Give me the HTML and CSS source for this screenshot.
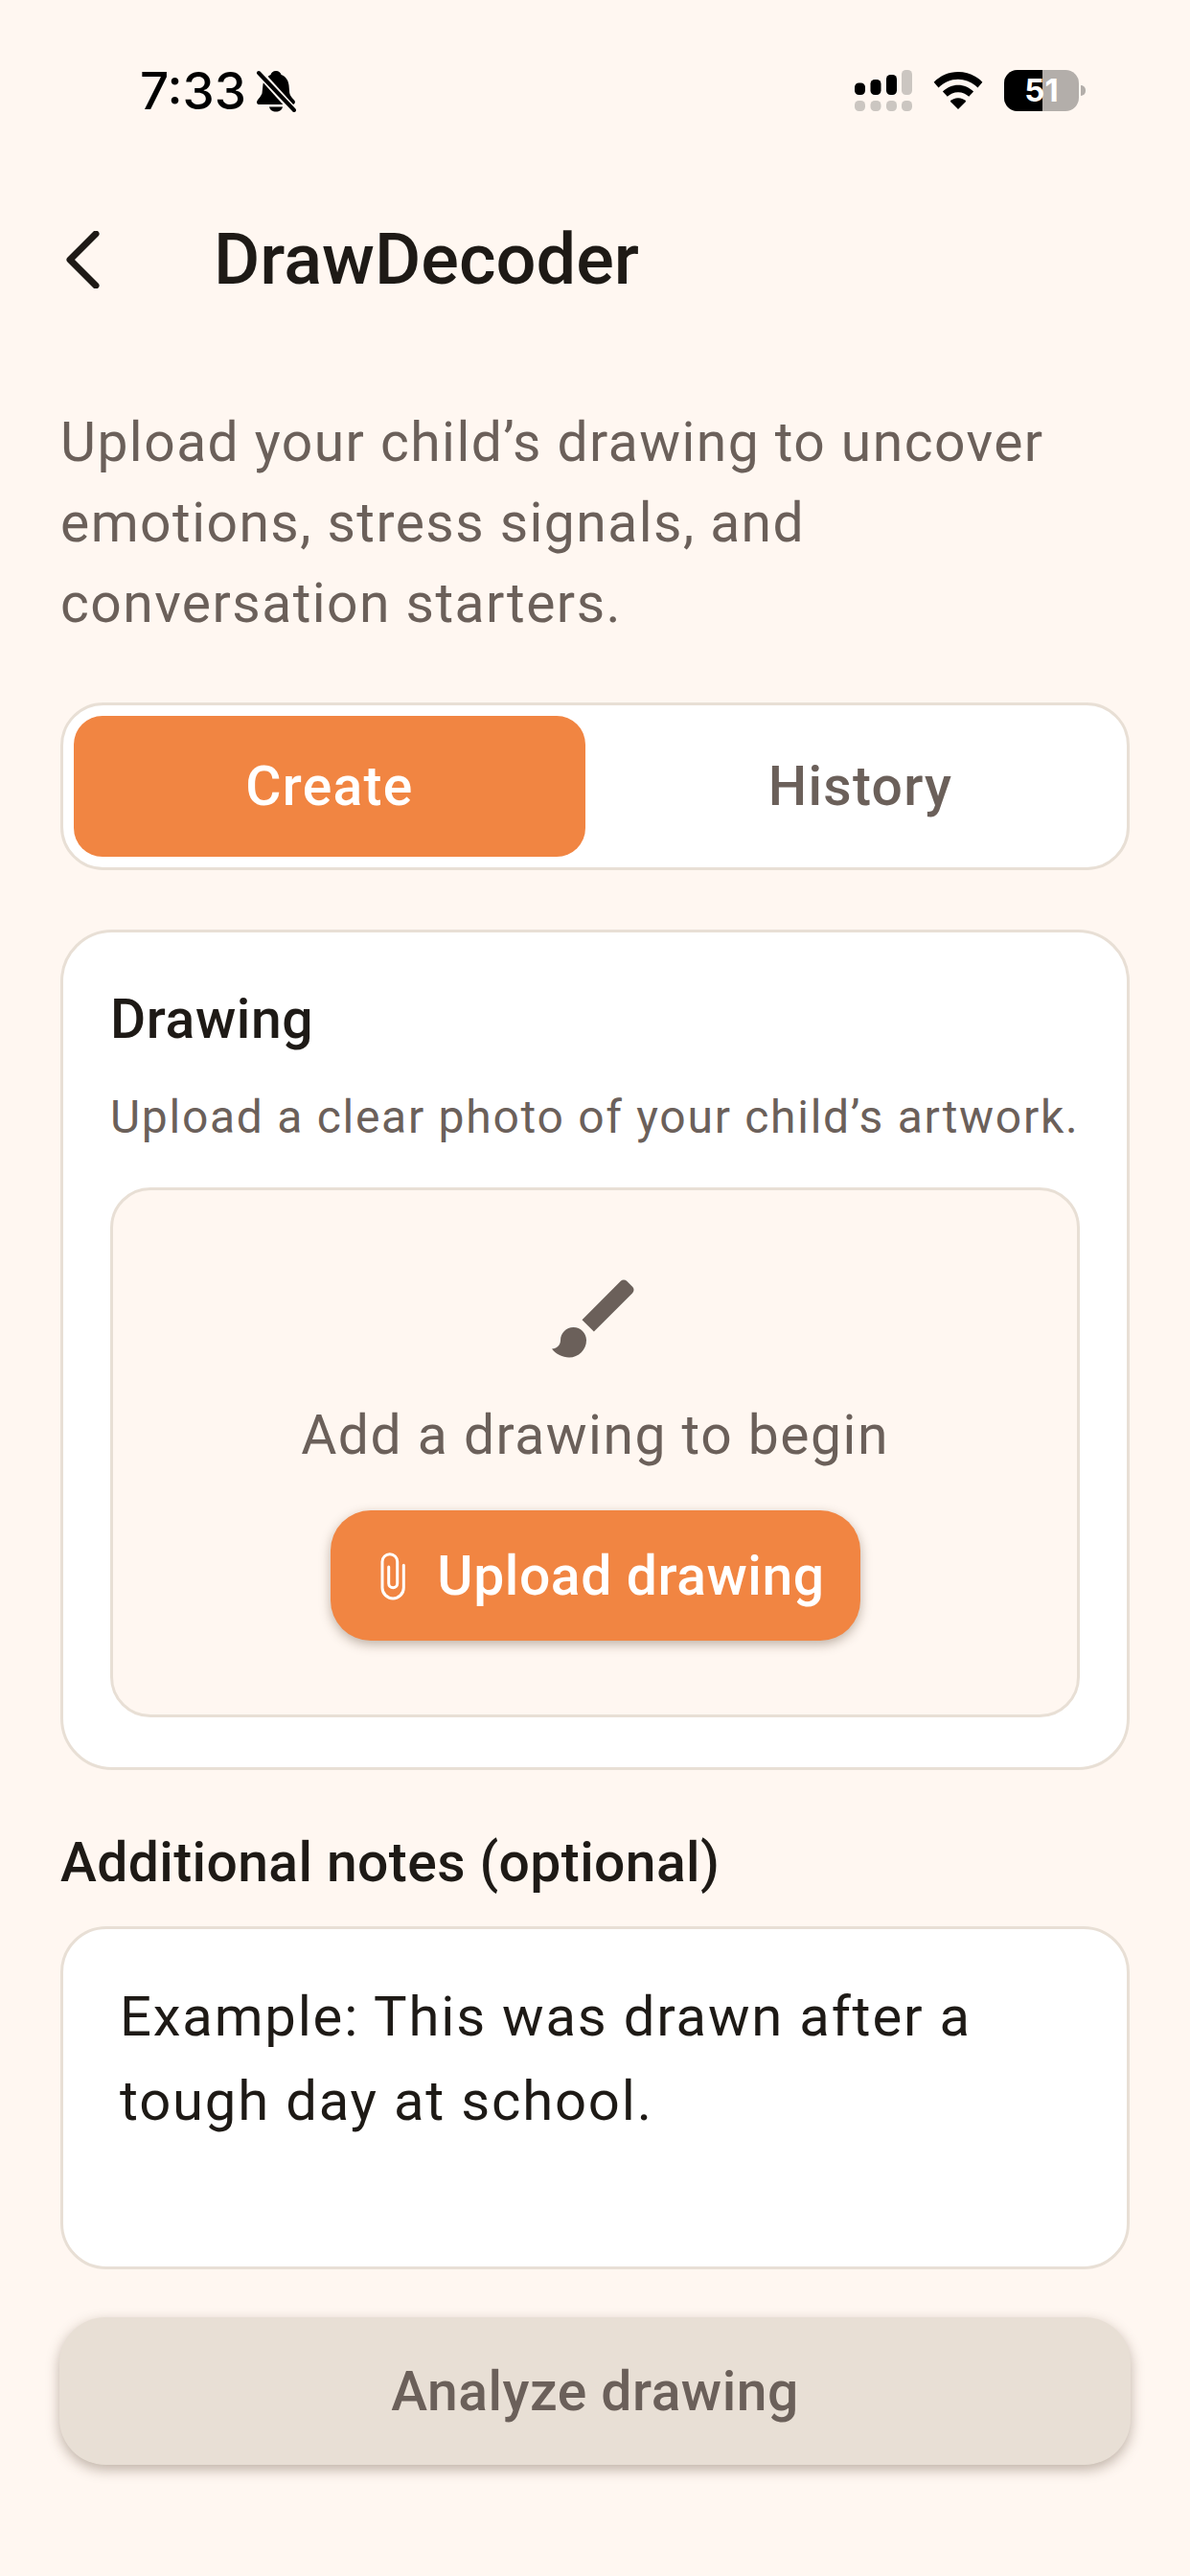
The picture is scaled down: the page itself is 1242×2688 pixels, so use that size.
FILE: index.html
```html
<!DOCTYPE html>
<html lang="en">
<head>
<meta charset="utf-8">
<title>DrawDecoder</title>
<link rel="stylesheet" href="styles.css">
</head>
<body>
<div class="status">
  <div class="status-left">
    <span class="time">7:33</span>
    <svg class="bell" viewBox="0 0 42 44"><path d="M21 1c3 0 5 2 5.500 4 5 2 7.500 6 8 11l.7 8c.3 3 2.800 5 5.300 8 1 2 0 4-2.500 4H4c-3 0-3.500-2-2.500-4 1.500-2.500 3.500-4 5-7.500L7.500 15c1-5 4-8 8-10 .5-2 2.500-4 5.500-4z"/><path d="M14 38.500h14c-.5 3-3.500 5-7 5s-6.500-2-7-5z"/><path class="bell-gap" d="M2 1l38 42"/><path class="bell-slash" d="M3 3l37 39"/></svg>
  </div>
  <div class="status-right">
    <svg class="signal" viewBox="0 0 60 43">
      <rect x="0" y="13.500" width="11" height="12.500" rx="4.500"/><rect x="16.500" y="10" width="11" height="16" rx="4.500"/><rect x="33" y="5" width="11" height="21" rx="4.500"/><rect class="dim" x="49" y="0" width="11" height="26" rx="4.500"/>
      <rect class="dim" x="0" y="32" width="11" height="11" rx="4.500"/><rect class="dim" x="16.500" y="32" width="11" height="11" rx="4.500"/><rect class="dim" x="33" y="32" width="11" height="11" rx="4.500"/><rect class="dim" x="49" y="32" width="11" height="11" rx="4.500"/>
    </svg>
    <svg class="wifi" viewBox="0 0 52 40"><path d="M26 0c10 0 19 4 26 11l-5 6C41 11 34 8 26 8S11 11 5 17L0 11C7 4 16 0 26 0z"/><path d="M26 14c6 0 12 2.500 16.500 7l-5 5.500c-3-3-7-4.700-11.500-4.700s-8.500 1.700-11.500 4.700l-5-5.500C14 16.500 20 14 26 14z"/><path d="M26 28c3.500 0 6.500 1.300 8.500 3.500L26 40l-8.500-8.500C19.500 29.300 22.500 28 26 28z"/></svg>
    <div class="battery">
      <div class="battery-body"><div class="battery-fill"></div><span class="battery-text">51</span></div>
      <div class="battery-cap"></div>
    </div>
  </div>
</div>

<main class="page">
  <header class="appbar">
    <svg class="back" viewBox="0 0 36 60"><path d="M32 3L5 30l27 27"/></svg>
    <h1 class="title">DrawDecoder</h1>
  </header>

  <p class="intro">Upload your child’s drawing to uncover emotions, stress signals, and conversation starters.</p>

  <div class="tabs">
    <div class="tab tab-active">Create</div>
    <div class="tab">History</div>
  </div>

  <section class="card">
    <h2 class="card-title">Drawing</h2>
    <p class="card-sub">Upload a clear photo of your child’s artwork.</p>
    <div class="dropzone">
      <svg class="brush" viewBox="0 0 24 24"><path d="M7 14c-1.660 0-3 1.340-3 3 0 1.310-1.160 2-2 2 .920 1.220 2.490 2 4 2 2.210 0 4-1.790 4-4 0-1.660-1.340-3-3-3zm13.710-9.370l-1.340-1.340c-.390-.390-1.020-.390-1.410 0L9 12.250 11.750 15l8.960-8.960c.390-.390.390-1.020 0-1.410z"/></svg>
      <p class="drop-text">Add a drawing to begin</p>
      <button class="upload" type="button">
        <svg class="clip" viewBox="-2 0 54 54"><path d="M38.300 16.300V39.800a11.150 11.150 0 0 1-22.300 0V12.550a7.850 7.850 0 0 1 15.700 0V35.200a4.500 4.500 0 0 1-9 0V18"/></svg>
        <span>Upload drawing</span>
      </button>
    </div>
  </section>

  <h2 class="notes-label">Additional notes (optional)</h2>
  <div class="notes">Example: This was drawn after a tough day at school.</div>

  <button class="analyze" type="button">Analyze drawing</button>
</main>
</body>
</html>
```

FILE: styles.css
```css
* { box-sizing: border-box; }
html, body { margin: 0; padding: 0; }
body {
  width: 1242px;
  height: 2688px;
  background: #fff7f1;
  color: #1e1a16;
  font-family: Roboto, "Noto Sans", sans-serif;
  overflow: hidden;
}
h1, h2, p { margin: 0; font-weight: inherit; }

.status {
  height: 190px;
  display: flex;
  justify-content: space-between;
  align-items: flex-start;
  padding: 68px 109px 0 146px;
}
.status-left { display: flex; align-items: center; gap: 10px; }
.time {
  font-family: Inter, Roboto, sans-serif;
  font-size: 53px;
  line-height: 54px;
  font-weight: 500;
  color: #000;
}
.bell { width: 42px; height: 44px; fill: #000; }
.bell-gap { fill: none; stroke: #fff7f1; stroke-width: 8px; }
.bell-slash { fill: none; stroke: #000; stroke-width: 4px; stroke-linecap: round; }
.status-right { display: flex; align-items: center; gap: 22px; padding-top: 5px; }
.signal { width: 60px; height: 43px; fill: #000; }
.signal .dim { fill: #cbc6c1; }
.wifi { width: 52px; height: 39px; fill: #000; }
.battery { display: flex; align-items: center; gap: 2px; }
.battery-body {
  position: relative;
  width: 78px;
  height: 43px;
  border-radius: 14px;
  background: #b3aeaa;
  overflow: hidden;
  display: flex;
  align-items: center;
  justify-content: center;
}
.battery-fill { position: absolute; left: 0; top: 0; bottom: 0; width: 40px; background: #000; }
.battery-text {
  position: relative;
  font-family: Inter, Roboto, sans-serif;
  font-size: 33px;
  font-weight: 700;
  color: #fff;
  line-height: 43px;
}
.battery-cap { width: 5px; height: 11px; background: #b3aeaa; border-radius: 0 7px 7px 0; }

.page { padding: 0 63px; display: flex; flex-direction: column; }

.appbar { height: 160px; display: flex; align-items: center; }
.back {
  width: 36px;
  height: 60px;
  margin-left: 5px;
  margin-top: 2px;
  fill: none;
  stroke: #1e1a16;
  stroke-width: 7px;
  stroke-linecap: round;
  stroke-linejoin: round;
}
.title {
  margin-left: 119px;
  margin-top: 1px;
  font-size: 74px;
  line-height: 80px;
  font-weight: 500;
  color: #1e1a16;
}

.intro {
  margin-top: 70px;
  width: 1060px;
  font-size: 57px;
  line-height: 84px;
  letter-spacing: 1.45px;
  color: #6b605a;
}

.tabs {
  margin-top: 61px;
  height: 175px;
  padding: 11px;
  display: flex;
  gap: 20px;
  background: #fff;
  border: 3px solid #e8dfd5;
  border-radius: 45px;
}
.tab {
  flex: 1 1 0;
  display: flex;
  align-items: center;
  justify-content: center;
  border-radius: 30px;
  font-size: 57px;
  font-weight: 500;
  letter-spacing: 1.3px;
  color: #6b605a;
}
.tab-active { background: #f18542; color: #fff; }

.card {
  margin-top: 62px;
  height: 877px;
  padding: 55px 49px 0;
  background: #fff;
  border: 3px solid #e8dfd5;
  border-radius: 54px;
}
.card-title { font-size: 57px; line-height: 72px; font-weight: 500; letter-spacing: 0.6px; color: #1e1a16; }
.card-sub {
  margin-top: 36px;
  font-size: 48px;
  line-height: 60px;
  letter-spacing: 1.72px;
  color: #6b605a;
  white-space: nowrap;
}
.dropzone {
  margin-top: 43px;
  height: 553px;
  background: #fff7f1;
  border: 3px solid #e8dfd5;
  border-radius: 42px;
  display: flex;
  flex-direction: column;
  align-items: center;
  padding-top: 80px;
}
.brush { width: 108px; height: 108px; fill: #6b605a; }
.drop-text {
  margin-top: 26px;
  font-size: 57px;
  line-height: 84px;
  letter-spacing: 1.5px;
  color: #6b605a;
}
.upload {
  margin-top: 36px;
  width: 553px;
  height: 136px;
  border: 0;
  border-radius: 42px;
  background: #f18542;
  color: #fff;
  box-shadow: 0 4px 12px rgba(70, 50, 30, 0.35);
  display: flex;
  align-items: center;
  justify-content: center;
  gap: 21px;
  font-family: Roboto, sans-serif;
  font-size: 57px;
  font-weight: 500;
  letter-spacing: 0.6px;
}
.clip { width: 54px; height: 54px; fill: none; stroke: #fff; stroke-width: 3px; stroke-linecap: round; }

.notes-label {
  margin-top: 61px;
  font-size: 57px;
  line-height: 72px;
  font-weight: 500;
  letter-spacing: 0.4px;
  color: #1e1a16;
}
.notes {
  margin-top: 30px;
  height: 358px;
  padding: 47px 59px 0;
  background: #fff;
  border: 3px solid #e8dfd5;
  border-radius: 48px;
  font-size: 58px;
  line-height: 88px;
  letter-spacing: 1.8px;
  color: #1e1a16;
}
.analyze {
  margin: 50px -1px 0;
  height: 154px;
  border: 0;
  border-radius: 48px;
  background: #e8dfd5;
  color: #6b605a;
  box-shadow: 0 5px 14px rgba(70, 50, 30, 0.35);
  font-family: Roboto, sans-serif;
  font-size: 57px;
  font-weight: 500;
  letter-spacing: 0.5px;
}
```
